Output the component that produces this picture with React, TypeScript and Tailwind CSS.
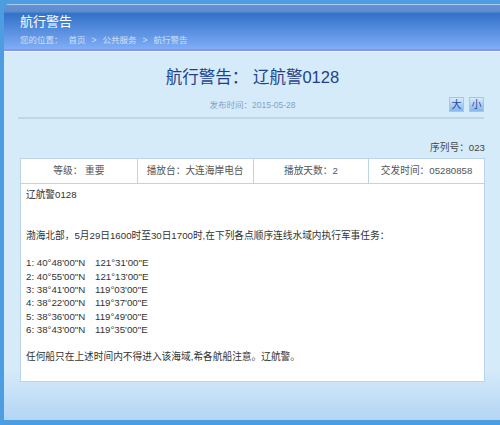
const FONT = "font-['Liberation_Sans','Noto_Sans_CJK_SC',sans-serif]";

const INFO = [
  '等级： 重要',
  '播放台：大连海岸电台',
  '播放天数：2',
  '交发时间：05280858',
];

const POINTS = [
  ['1: 40°48\'00"N', '121°31\'00"E'],
  ['2: 40°55\'00"N', '121°13\'00"E'],
  ['3: 38°41\'00"N', '119°03\'00"E'],
  ['4: 38°22\'00"N', '119°37\'00"E'],
  ['5: 38°36\'00"N', '119°49\'00"E'],
  ['6: 38°43\'00"N', '119°35\'00"E'],
];

function SizeButton({ label }: { label: string }) {
  return (
    <button className="w-[15px] h-[15px] flex items-center justify-center border border-[#a6c6e8] bg-[linear-gradient(to_bottom,#d8ebfc,#86b5ec)] text-[10px] leading-none text-[#1d4a9c]">
      {label}
    </button>
  );
}

export default function App() {
  return (
    <div className={`w-[500px] h-[425px] bg-[#4c9de2] pt-[4px] pl-[4px] pb-[5px] ${FONT}`}>
      <div className="h-full flex flex-col rounded-tl-[5px] overflow-hidden">
        {/* header */}
        <div className="h-[47px] shrink-0 border-t border-[#aecbed] border-b-2 border-b-[#8a92ef] bg-[linear-gradient(to_bottom,#6392d2_0%,#5e8ed0_14%,#3272c8_20%,#80adf7_100%)] pl-[16px]">
          <div className="text-[13px] leading-[16px] text-white mt-[9px]">航行警告</div>
          <div className="flex items-center text-[8.5px] leading-[12px] text-[#cfe0f6] mt-[4px]">
            <span>您的位置：</span>
            <span className="ml-[6px]">首页</span>
            <span className="ml-[6px]">&gt;</span>
            <span className="ml-[6px]">公共服务</span>
            <span className="ml-[6px]">&gt;</span>
            <span className="ml-[6px]">航行警告</span>
          </div>
        </div>

        {/* body */}
        <div className="flex-1 border-t border-[#eef8fe] bg-[linear-gradient(to_bottom,#d6ebf9_0%,#d6ebf9_86%,#b4d5f5_100%)] pl-[16px] pr-[15px] pt-[15px]">
          <h1 className="text-center text-[16.5px] leading-[20px] text-[#1e3f8c]">航行警告： 辽航警0128</h1>

          <div className="relative mt-[10px] h-[16px] flex items-center justify-center">
            <span className="text-[8.5px] text-[#82a2c6]">发布时间：2015-05-28</span>
            <div className="absolute right-[1px] top-0 flex gap-[5px]">
              <SizeButton label="大" />
              <SizeButton label="小" />
            </div>
          </div>
          <div className="mt-[4px] -ml-[2px] mr-[1px] border-b-2 border-[#bcd6ea]" />

          <div className="mt-[23px] text-right text-[9.7px] leading-[12px] text-[#444]">序列号：023</div>

          <div className="mt-[4px] grid grid-cols-4 border border-[#bcd4e8] bg-white text-[9.7px] text-[#555]">
            {INFO.map((t, i) => (
              <div
                key={t}
                className={`h-[24px] flex items-center justify-center ${i > 0 ? 'border-l border-[#bcd4e8]' : ''}`}
              >
                {t}
              </div>
            ))}
          </div>

          <div className="h-[198px] border border-t-0 border-[#bcd4e8] bg-white px-[5px] pt-[4px] text-[9.7px] leading-[13.4px] text-[#333]">
            <div>辽航警0128</div>
            <div className="mt-[28px]">渤海北部，5月29日1600时至30日1700时,在下列各点顺序连线水域内执行军事任务：</div>
            <div className="mt-[13.4px]">
              {POINTS.map(([lat, lon]) => (
                <div key={lat} className="flex">
                  <span className="w-[69px] whitespace-pre">{lat}</span>
                  <span>{lon}</span>
                </div>
              ))}
            </div>
            <div className="mt-[13.4px]">任何船只在上述时间内不得进入该海域,希各航船注意。辽航警。</div>
          </div>
        </div>
      </div>
    </div>
  );
}
